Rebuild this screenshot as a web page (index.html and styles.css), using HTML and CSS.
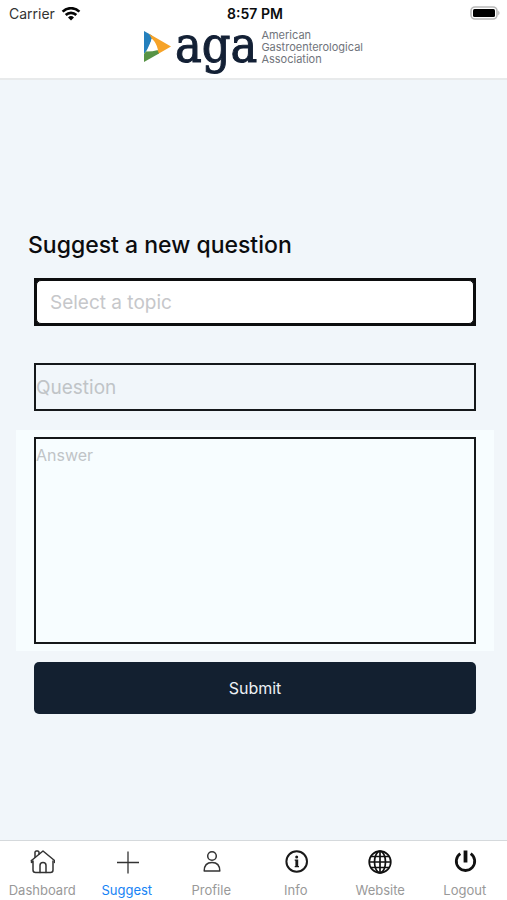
FILE: index.html
```html
<!DOCTYPE html>
<html lang="en">
<head>
<meta charset="utf-8">
<meta name="viewport" content="width=device-width, initial-scale=1">
<title>Suggest a new question</title>
<link rel="stylesheet" href="styles.css">
</head>
<body>
<header class="header">
  <div class="status">
    <div class="carrier">
      <span>Carrier</span>
      <svg width="20" height="14" viewBox="0 0 20 14" fill="none" stroke="#050505" stroke-width="2.6" aria-hidden="true">
        <path d="M1.6 4.600a12 12 0 0 1 16.8 0"/>
        <path d="M4.7 8a7.6 7.6 0 0 1 10.6 0"/>
        <path d="M10 13.500 7 10.500a4.4 4.4 0 0 1 6 0z" fill="#050505" stroke="none"/>
      </svg>
    </div>
    <time class="clock">8:57 PM</time>
    <svg class="battery" width="31" height="15" viewBox="0 0 31 15" aria-hidden="true">
      <rect x="1" y="1" width="26" height="12" rx="4" fill="#fff" stroke="#b9b9b9" stroke-width="1.6"/>
      <rect x="3" y="3" width="22" height="8" rx="1.5" fill="#000"/>
      <path d="M28.3 4.500q2.4 2.5 0 5z" fill="#aaa"/>
    </svg>
  </div>
  <div class="brand">
    <svg width="27" height="32" viewBox="0 0 27 32" aria-hidden="true">
      <path d="M0 0 8 4.500V8L3 19l-3 4z" fill="#2480bd"/>
      <path d="M5 2.800 27 15.500 14 23l-1-5-5-10z" fill="#f6a329"/>
      <path d="M0 31V23l3-4 10-1 2 4.500z" fill="#579345"/>
      <path d="M7.500 7.500q5 4 6.500 11.500-5 1.500-12 1.500 4.500-5 5.500-13z" fill="#fff"/>
    </svg>
    <span class="wordmark">aga</span>
    <span class="tagline">American<br>Gastroenterological<br>Association</span>
  </div>
</header>
<main class="main">
  <h1 class="title">Suggest a new question</h1>
  <form class="form">
    <div class="picker">
      <select class="select" aria-label="Topic">
        <option>Select a topic</option>
      </select>
    </div>
    <input class="question" type="text" placeholder="Question" aria-label="Question">
    <div class="panel">
      <textarea class="answer" placeholder="Answer" aria-label="Answer"></textarea>
    </div>
    <button class="submit" type="submit">Submit</button>
  </form>
</main>
<nav class="tabs">
  <a class="tab" href="#dashboard">
    <svg class="icon" viewBox="0 0 26 26" fill="none" stroke="#333" stroke-width="1.5" stroke-linejoin="round" stroke-linecap="round" aria-hidden="true">
      <path d="M2.500 11.500 14 2l11.500 9.500v2"/>
      <path d="M2.500 11.500v2M4 12v9q0 2.500 2.500 2.500h15q2.500 0 2.500-2.500v-9"/>
      <path d="M6 8.300V3l1-1h2l1 1v2M11 23.500v-7q0-3 3-3t3 3v7"/>
    </svg>
    Dashboard
  </a>
  <a class="tab active" href="#suggest" aria-current="page">
    <svg class="icon" viewBox="0 0 26 26" fill="none" stroke="#333" stroke-width="1.300" aria-hidden="true">
      <path d="M3 13.500h22M14 2.500v22"/>
    </svg>
    Suggest
  </a>
  <a class="tab" href="#profile">
    <svg class="icon" viewBox="0 0 26 26" fill="none" stroke="#333" stroke-width="1.500" stroke-linejoin="round" aria-hidden="true">
      <circle cx="14" cy="7" r="4.300"/>
      <path d="M6.200 22q0-8.500 7.800-8.500t7.800 8.500z"/>
    </svg>
    Profile
  </a>
  <a class="tab" href="#info">
    <svg class="icon" viewBox="0 0 26 26" aria-hidden="true">
      <circle cx="13.700" cy="12.500" r="10.300" fill="none" stroke="#1a1a1a" stroke-width="2"/>
      <circle cx="13.700" cy="8" r="1.500" fill="#1a1a1a"/>
      <path d="M11.700 10.500h3.500v6.500h.800v1.200h-4.300V17h.700v-5.300h-.7z" fill="#1a1a1a"/>
    </svg>
    Info
  </a>
  <a class="tab" href="#website">
    <svg class="icon" viewBox="0 0 26 26" fill="none" stroke="#111" stroke-width="1.700" aria-hidden="true">
      <circle cx="13" cy="13" r="10.800"/>
      <ellipse cx="13" cy="13" rx="5.500" ry="10.800"/>
      <path d="M13 2v22M2 13h22M4 7.500h18M4 18.500h18"/>
    </svg>
    Website
  </a>
  <a class="tab" href="#logout">
    <svg class="icon" viewBox="0 0 26 26" fill="none" stroke="#111" stroke-width="2.800" aria-hidden="true">
      <path d="M8.300 4.700a9.200 9.200 0 1 0 10.400 0"/>
      <path d="M13.500 1.500v12" stroke-width="3.800"/>
    </svg>
    Logout
  </a>
</nav>
</body>
</html>
```
FILE: styles.css
```css
* {
  box-sizing: border-box;
}

body {
  margin: 0;
  min-height: 100vh;
  display: flex;
  flex-direction: column;
  background: #f1f6fa;
  font-family: Inter, "Liberation Sans", sans-serif;
  color: #0b0c0e;
}

.header {
  height: 80px;
  background: #fff;
  border-bottom: 2px solid #e8eaeb;
}

.status {
  height: 27px;
  padding: 0 6px 0 9px;
  display: grid;
  grid-template-columns: 1fr auto 1fr;
  align-items: center;
  font-size: 14px;
}

.carrier {
  display: flex;
  align-items: center;
  gap: 6px;
  color: #333;
}

.clock {
  font-weight: 600;
}

.battery {
  justify-self: end;
}

.brand {
  height: 40px;
  display: flex;
  align-items: center;
  justify-content: center;
  gap: 4px;
}

.wordmark {
  font-family: "DejaVu Serif Condensed", "DejaVu Serif", serif;
  font-size: 50px;
  line-height: 40px;
  padding-bottom: 4px;
  color: #132035;
  -webkit-text-stroke: 1px #132035;
}

.tagline {
  font-size: 11px;
  line-height: 12px;
  color: #70747b;
}

.main {
  flex: 1;
  padding: 150px 31px 60px 34px;
}

.title {
  margin: 0 0 18px -6px;
  font-size: 23px;
  line-height: 30px;
  font-weight: 500;
}

.form {
  display: flex;
  flex-direction: column;
}

.picker {
  height: 48px;
  border: 2px solid #0c0d0e;
  background: #0c0d0e;
}

.select {
  appearance: none;
  display: block;
  width: 100%;
  height: 100%;
  padding: 0 13px;
  border: 1px solid #0c0d0e;
  border-radius: 5px;
  background: #fff;
  color: #c6c7ca;
  font: inherit;
  font-size: 19px;
}

.question {
  height: 48px;
  margin-top: 37px;
  padding: 0;
  border: 2px solid #15181a;
  border-radius: 0;
  background: transparent;
  font: inherit;
  font-size: 19px;
}

.question::placeholder,
.answer::placeholder {
  color: #c0c4c7;
  opacity: 1;
}

.panel {
  margin: 19px -18px 0;
  padding: 7px 18px;
  background: #f7fdff;
}

.answer {
  display: block;
  width: 100%;
  height: 207px;
  padding: 5px 0;
  border: 2px solid #15181a;
  border-radius: 0;
  background: transparent;
  resize: none;
  font: inherit;
  font-size: 16px;
  line-height: 22px;
}

.submit {
  height: 52px;
  margin-top: 11px;
  border: 0;
  border-radius: 5px;
  background: #132030;
  color: #edf1f5;
  font: inherit;
  font-size: 16px;
}

.tabs {
  height: 60px;
  display: grid;
  grid-template-columns: repeat(6, 1fr);
  background: #fff;
  border-top: 1px solid #d5d9dc;
}

.tab {
  display: flex;
  flex-direction: column;
  align-items: center;
  gap: 6px;
  padding-top: 8px;
  color: #999;
  font-size: 13px;
  line-height: 18px;
  text-decoration: none;
}

.active {
  color: #1683f5;
}

.icon {
  width: 26px;
  height: 26px;
}
```
